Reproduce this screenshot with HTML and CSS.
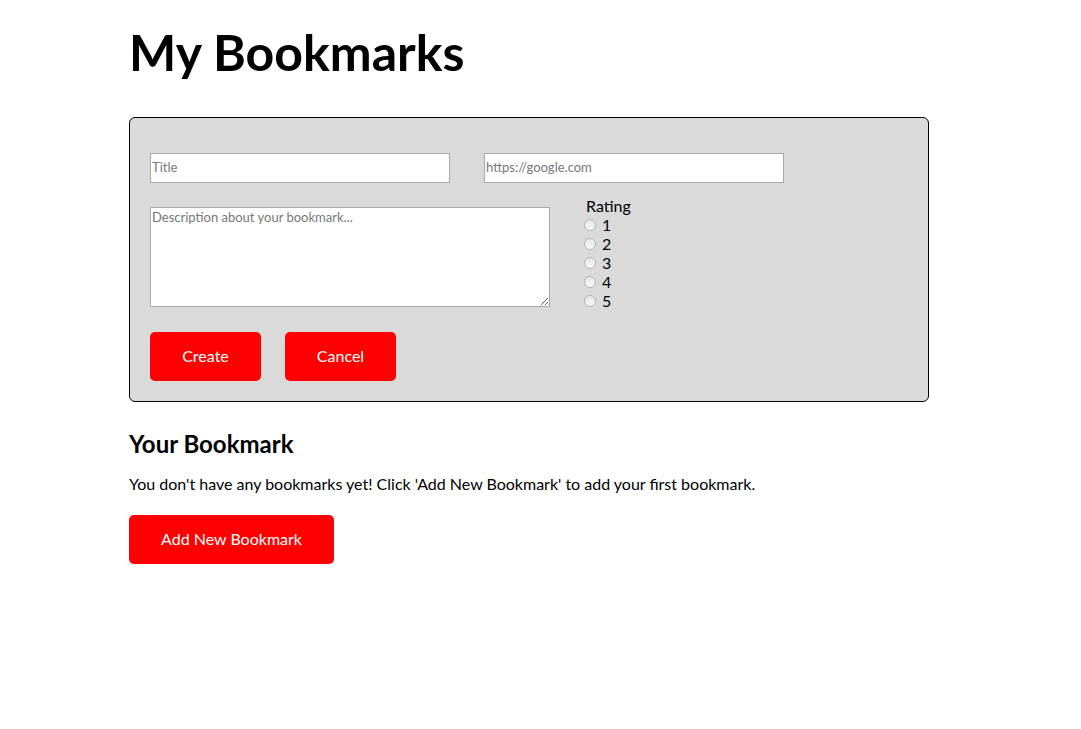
FILE: index.html
```html
<!DOCTYPE html>
<html lang="en">
<head>
<meta charset="utf-8">
<title>My Bookmarks</title>
<link rel="stylesheet" href="styles.css">
</head>
<body>
<main class="page">
  <h1 class="title">My Bookmarks</h1>
  <form class="bookmark-form">
    <div class="row row-top">
      <input class="field field-text" type="text" placeholder="Title">
      <input class="field field-text" type="text" placeholder="https://google.com">
    </div>
    <div class="row row-mid">
      <textarea class="field field-area" placeholder="Description about your bookmark..."></textarea>
      <div class="rating">
        <div class="rating-label">Rating</div>
        <label class="rating-option"><input type="radio" name="rating" value="1">1</label>
        <label class="rating-option"><input type="radio" name="rating" value="2">2</label>
        <label class="rating-option"><input type="radio" name="rating" value="3">3</label>
        <label class="rating-option"><input type="radio" name="rating" value="4">4</label>
        <label class="rating-option"><input type="radio" name="rating" value="5">5</label>
      </div>
    </div>
    <div class="row row-actions">
      <button type="button" class="btn btn-small">Create</button>
      <button type="button" class="btn btn-small">Cancel</button>
    </div>
  </form>
  <h2 class="subtitle">Your Bookmark</h2>
  <p class="empty">You don't have any bookmarks yet! Click 'Add New Bookmark' to add your first bookmark.</p>
  <button type="button" class="btn btn-add">Add New Bookmark</button>
</main>
</body>
</html>
```

FILE: styles.css
```css
html, body {
  margin: 0;
  padding: 0;
  background: #ffffff;
}

body {
  font-family: Lato, "Open Sans", sans-serif;
  font-size: 16px;
  color: #000;
}

.page {
  width: 800px;
  padding: 0 0 0 129px;
}

.title {
  font-size: 50px;
  font-weight: 700;
  margin: 0;
  padding-top: 23px;
  line-height: 58px;
}

.bookmark-form {
  margin-top: 36px;
  background: #dadada;
  border: 1px solid #000;
  border-radius: 6px;
  padding: 35px 20px 20px;
  display: flex;
  flex-direction: column;
}

.row {
  display: flex;
  gap: 34px;
}

.row-mid {
  align-items: center;
  margin-top: 13px;
}

.row-actions {
  margin-top: 14px;
  gap: 24px;
}

.field {
  font-family: Lato, sans-serif;
  font-size: 13px;
  border: 1px solid #a9a9a9;
  background: #fff;
  box-sizing: border-box;
  margin: 0;
  padding: 1px 1px 3px;
  outline: none;
}

.field::placeholder {
  color: #777;
}

.field-text {
  width: 300px;
  height: 30px;
}

.field-area {
  width: 400px;
  height: 100px;
  resize: both;
}

.rating {
  display: flex;
  flex-direction: column;
  margin-bottom: 8px;
}

.rating-label {
  padding-left: 2px;
  line-height: 19px;
}

.rating-option {
  display: flex;
  align-items: center;
  line-height: 19px;
  height: 19px;
}

.rating-option input {
  -webkit-appearance: none;
  appearance: none;
  box-sizing: border-box;
  margin: 0 6px 0 0;
  width: 12px;
  height: 12px;
  border-radius: 50%;
  border: 1px solid #b4b4b4;
  background: linear-gradient(#e6e6e6, #f8f8f8);
}

.btn {
  background: #ff0000;
  color: #fff;
  border: none;
  border-radius: 5px;
  font-family: Lato, sans-serif;
  font-size: 16px;
  height: 49px;
  padding: 0 0 3px;
  cursor: pointer;
}

.btn-small {
  width: 111px;
}

.subtitle {
  font-size: 24px;
  font-weight: 700;
  margin: 27px 0 0;
  line-height: 30px;
}

.empty {
  margin: 15px 0 0;
  line-height: 20px;
}

.btn-add {
  margin-top: 21px;
  width: 205px;
}
```
